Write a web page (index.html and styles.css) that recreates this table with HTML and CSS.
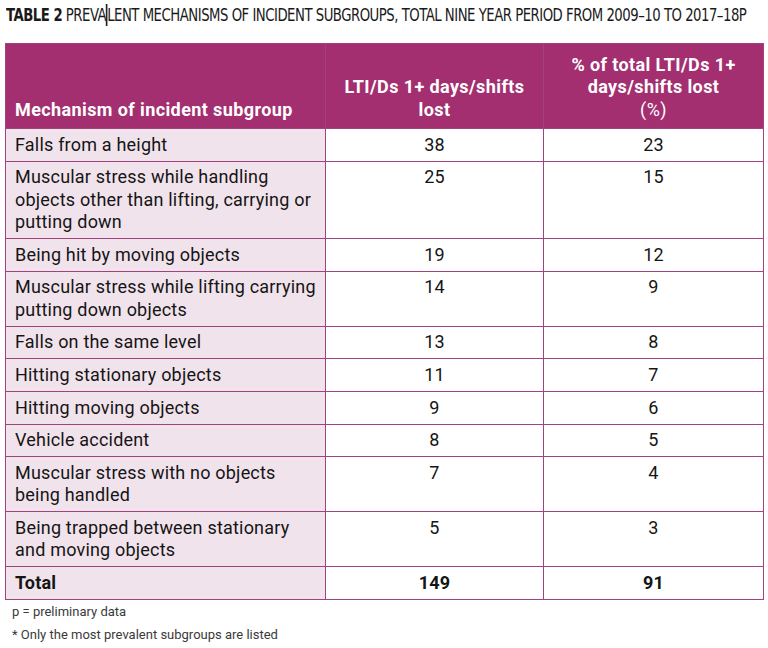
FILE: index.html
```html
<!DOCTYPE html>
<html lang="en">
<head>
<meta charset="utf-8">
<title>Table 2</title>
<link rel="stylesheet" href="styles.css">
</head>
<body>
<div class="page">
  <h1 class="title"><span class="title-text"><span class="label">TABLE 2</span> PREVA<span class="caret"></span>LENT MECHANISMS OF INCIDENT SUBGROUPS, TOTAL NINE YEAR PERIOD FROM 2009–10 TO 2017–18P</span></h1>
  <table class="data">
    <colgroup>
      <col class="c1"><col class="c2"><col class="c3">
    </colgroup>
    <thead>
      <tr>
        <th class="h-left">Mechanism of incident subgroup</th>
        <th class="h-num">LTI/Ds 1+ days/shifts<br>lost</th>
        <th class="h-num">% of total LTI/Ds 1+<br>days/shifts lost<br><span class="pct">(%)</span></th>
      </tr>
    </thead>
    <tbody>
      <tr><td class="name">Falls from a height</td><td class="num">38</td><td class="num">23</td></tr>
      <tr><td class="name">Muscular stress while handling<br>objects other than lifting, carrying or<br>putting down</td><td class="num">25</td><td class="num">15</td></tr>
      <tr><td class="name">Being hit by moving objects</td><td class="num">19</td><td class="num">12</td></tr>
      <tr><td class="name">Muscular stress while lifting carrying<br>putting down objects</td><td class="num">14</td><td class="num">9</td></tr>
      <tr><td class="name">Falls on the same level</td><td class="num">13</td><td class="num">8</td></tr>
      <tr><td class="name">Hitting stationary objects</td><td class="num">11</td><td class="num">7</td></tr>
      <tr><td class="name">Hitting moving objects</td><td class="num">9</td><td class="num">6</td></tr>
      <tr><td class="name">Vehicle accident</td><td class="num">8</td><td class="num">5</td></tr>
      <tr><td class="name">Muscular stress with no objects<br>being handled</td><td class="num">7</td><td class="num">4</td></tr>
      <tr><td class="name">Being trapped between stationary<br>and moving objects</td><td class="num">5</td><td class="num">3</td></tr>
      <tr class="total"><td class="name">Total</td><td class="num">149</td><td class="num">91</td></tr>
    </tbody>
  </table>
  <p class="note">p = preliminary data</p>
  <p class="note">* Only the most prevalent subgroups are listed</p>
</div>
</body>
</html>
```

FILE: styles.css
```css
html, body {
  margin: 0;
  padding: 0;
  background: #ffffff;
  overflow: hidden;
}

.page {
  width: 768px;
  height: 648px;
  padding: 0 0 0 5px;
  box-sizing: border-box;
  font-family: Roboto, "DejaVu Sans", sans-serif;
  color: #151515;
  overflow: hidden;
}

.title {
  margin: 0;
  height: 43px;
  padding-top: 4px;
  padding-left: 1px;
  box-sizing: border-box;
  font-family: "DejaVu Sans Condensed", "DejaVu Sans", sans-serif;
  font-weight: normal;
  font-size: 18px;
  line-height: 22px;
  letter-spacing: -0.6px;
  color: #1a1a1a;
  white-space: nowrap;
}

.title-text {
  display: inline-block;
  transform: scaleX(0.818);
  transform-origin: left center;
}

.title .label {
  font-weight: bold;
}

.caret {
  display: inline-block;
  width: 1.3px;
  height: 22px;
  background: #222;
  vertical-align: -5px;
}

.data {
  border-collapse: collapse;
  width: 758px;
  table-layout: fixed;
  font-size: 18px;
  line-height: 22.5px;
}

.c1 { width: 320px; }
.c2 { width: 218px; }
.c3 { width: 220px; }

.data th,
.data td {
  border: 1px solid #a0427d;
}

.data thead th {
  background: #a32f70;
  color: #ffffff;
  font-weight: bold;
  letter-spacing: 0.4px;
  height: 77px;
  padding: 0 9px 7px;
  vertical-align: bottom;
}

.h-left {
  text-align: left;
}

.h-num {
  text-align: center;
}

.pct {
  font-weight: normal;
}

.data td {
  padding: 4.5px 9px 4.6px;
  vertical-align: top;
  letter-spacing: 0.2px;
}

.data td.name {
  background: #f1e3ec;
  text-align: left;
}

.data td.num {
  background: #ffffff;
  text-align: center;
}

.total td {
  font-weight: bold;
}

.note {
  margin: 0;
  padding-left: 7px;
  font-size: 13px;
  line-height: 23px;
  color: #3a3a3a;
}
```
